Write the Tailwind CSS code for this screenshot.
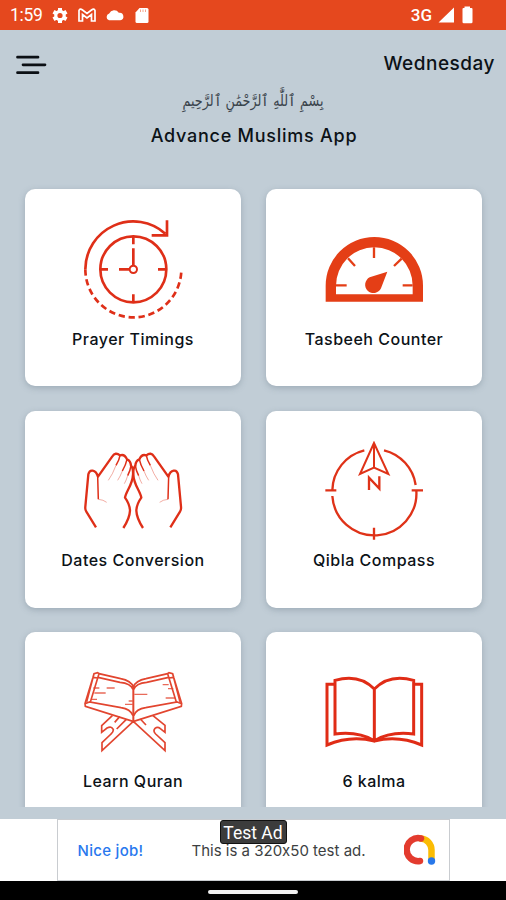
<!DOCTYPE html>
<html lang="en">
<head>
<meta charset="utf-8">
<title>Advance Muslims App</title>
<script src="https://cdn.jsdelivr.net/npm/@tailwindcss/browser@4"></script>
</head>
<body class="h-[900px] w-[506px] overflow-hidden bg-[#c1cdd6] font-['Inter',sans-serif] text-[#0c1217]">
<div class="flex h-[900px] flex-col">
  <header class="flex h-[30px] shrink-0 items-center bg-[#e5481e] pr-[33px] pl-[10px] text-white">
    <span class="w-[42px] font-['Roboto',sans-serif] text-[17.5px] leading-[32px] tracking-[-.3px] whitespace-nowrap">1:59</span>
    <svg class="h-[18px] w-[100px]" viewBox="52 6 100 18" fill="none">
      <circle cx="60" cy="15.5" r="4.2" stroke="#fff" stroke-width="3.2"/>
      <path d="M60 8v3M60 20v3M53.5 11.7l2.6 1.5M63.9 17.8l2.6 1.5M53.5 19.3l2.6-1.5M63.9 13.2l2.6-1.5" stroke="#fff" stroke-width="4"/>
      <path d="M79 21V10.500Q80 8 82.500 10L87 13.500 91.500 10Q94 8 95 10.500V21H91.500V14.500L87 18 82.500 14.500V21Z" stroke="#fff" stroke-width="1.700"/>
      <path d="M109 20.300a3.500 3.500 0 0 1 .2-6.700A5.500 5.500 0 0 1 118.800 12.800a3.800 3.800 0 0 1 1.500 7.500Z" fill="#fff"/>
      <path d="M139.500 8h7.500q1.500 0 1.500 1.500V21.500Q148.500 23 147 23H137q-1.500 0-1.500-1.500V12.500Z" fill="#fff"/>
      <path d="M140.500 9.500v2.500M143 9.500v2.500M145.500 9.500v2.500" stroke="#f5a58d" stroke-width="1"/>
    </svg>
    <span class="ml-auto font-['Roboto',sans-serif] text-[17px] leading-[30px] font-medium">3G</span>
    <svg class="ml-[5px] h-[18px] w-[36px]" viewBox="437 6 36 18" fill="#fff"><path d="M438.500 22.500L454 7.500V22.500ZM464.500 8V6.500H470V8h1.500q1 0 1 1V22q0 1.300-1.300 1.300h-7.400q-1.300 0-1.300-1.300V9q0-1 1-1Z"/></svg>
  </header>

  <main class="flex h-[777px] shrink-0 flex-col overflow-hidden">
    <div class="flex h-[56px] shrink-0 items-start justify-between pr-[11px] pl-4">
      <svg class="mt-[24px] h-[22px] w-[32px]" viewBox="0 0 32 22" stroke="#0b0f14" stroke-width="2.700" stroke-linecap="round"><path d="M1.500 3.200H22M7 10.800H29M1.500 18.700H22"/></svg>
      <span class="mt-[22px] text-[19px] leading-6 font-medium tracking-[.5px]">Wednesday</span>
    </div>
    <p dir="rtl" lang="ar" class="mt-[2px] h-[26px] shrink-0 scale-x-98 scale-y-120 text-center font-['DejaVu_Sans',sans-serif] text-[13px] leading-[26px] whitespace-nowrap text-[#3a444c]">بِسْمِ ٱللَّٰهِ ٱلرَّحْمَٰنِ ٱلرَّحِيمِ</p>
    <h1 class="mt-[10px] h-6 shrink-0 pl-[2px] text-center text-[18px] leading-6 font-medium tracking-[.75px]">Advance Muslims App</h1>

    <section class="mt-[41px] grid shrink-0 auto-rows-[197px] grid-cols-[216px_216px] gap-x-[25px] gap-y-[24.5px] pl-[25px] text-center text-[16px] leading-5 font-medium tracking-[.5px]">
      <div class="flex flex-col items-center rounded-[10px] bg-white pt-[30px] shadow-[0_2px_6px_#66788666]">
        <svg class="h-[100px] w-[100px] shrink-0" viewBox="39 42 300 300" fill="none" stroke="#df2f18" stroke-width="8">
          <circle cx="190" cy="193" r="99"/><circle cx="190" cy="193" r="11" stroke-width="6"/>
          <path d="M46 193A144 144 0 0 1 286 86M291 46V91H245M190 94V118M190 130V181M190 268V292M91 193H114M147 193H178M264 193H290"/>
          <path d="M46 193A144 144 0 0 0 334 193" stroke-dasharray="19 11.200"/>
        </svg>
        <span class="mt-[10px]">Prayer Timings</span>
      </div>
      <div class="flex flex-col items-center rounded-[10px] bg-white pt-[30px] shadow-[0_2px_6px_#66788666]">
        <svg class="h-[100px] w-[100px] shrink-0" viewBox="72 12 300 300" fill="#e43e16">
          <path fill-rule="evenodd" d="M77 260V212A146 146 0 0 1 369 212V260ZM108 238H338V212A115 115 0 0 0 108 212Z"/>
          <path d="M108 211H140M308 211H338M222 97V129M144 130L165 153M305 131L282 153" stroke="#e43e16" stroke-width="7"/>
          <path d="M262 170L209 187A25 25 0 1 0 243 220Z"/>
        </svg>
        <span class="mt-[10px]">Tasbeeh Counter</span>
      </div>
      <div class="flex flex-col items-center rounded-[10px] bg-white pt-[30px] shadow-[0_2px_6px_#66788666]">
        <svg class="h-[100px] w-[100px] shrink-0" viewBox="69 18 300 300" fill="none" stroke="#df2f18" stroke-width="7" stroke-linejoin="round">
          <g id="hand">
            <path d="M108 277L79 230Q75 224 76 215L85 118Q88 105 98 107Q109 109 114 125L157 64Q166 50 180 61Q194 56 201 73Q212 77 213 92Q220 99 219 119Q218 138 205 163Q196 181 195 188Q209 207 210 227Q209 250 190 279"/>
            <path d="M113 124L115 193M180 61Q178 75 168 91M201 73Q198 88 187 108M213 92Q211 107 203 122" stroke-width="4.500"/>
            <path d="M115 193Q130 194 140 202M168 91Q158 118 145 136M187 108Q181 124 173 136M203 122Q199 136 193 146" stroke-width="2" opacity=".6"/>
          </g>
          <use href="#hand" transform="translate(439 0) scale(-1 1)"/>
        </svg>
        <span class="mt-[9px]">Dates Conversion</span>
      </div>
      <div class="flex flex-col items-center rounded-[10px] bg-white pt-[30px] shadow-[0_2px_6px_#66788666]">
        <svg class="h-[100px] w-[100px] shrink-0" viewBox="72 33 300 300" fill="none" stroke="#df3218" stroke-width="7">
          <path d="M193 61A126 126 0 0 0 97 181M252 61A126 126 0 0 1 347 165M97 198A126 126 0 0 0 349 182M76 181H109M335 181H369M222 293V329"/>
          <path d="M222 39L180 132L222 113L265 132ZM222 39V113" stroke-width="6"/>
          <path d="M207 180V143L238 176V139" stroke-width="7"/>
        </svg>
        <span class="mt-[9px]">Qibla Compass</span>
      </div>
      <div class="flex flex-col items-center rounded-[10px] bg-white pt-[30px] shadow-[0_2px_6px_#66788666]">
        <svg class="h-[100px] w-[100px] shrink-0" viewBox="54 21 300 300" fill="none" stroke="#e2452f" stroke-width="5">
          <path id="stand" d="M205 96Q198 77 167 71L102 56L98 53L87 56L84 67L60 146L61 154L204 199M102 56L76 141L168 158Q196 162 204 182M99 67L165 82Q197 85 204 103M84 67L98 69M60 146L75 140M87 56L65 140"/>
          <path d="M205 90V199" stroke-width="6"/>
          <use href="#stand" transform="translate(410 0) scale(-1 1)"/>
          <path d="M142 182L110 212V232L126 219Q140 212 145 224Q145 231 138 237L111 263V287L205 199L300 287V263L272 237Q263 228 270 220Q278 214 286 221L300 232V211L263 181M164 185L149 202M184 193L155 222M226 192L243 210"/>
          <path d="M85 99H103M125 99H149M88 114H122M79 133H96M191 138H203M180 148H203M208 118H247M293 89H311M309 101H325M302 129H330" stroke-width="4" opacity=".8"/>
        </svg>
        <span class="mt-[9px]">Learn Quran</span>
      </div>
      <div class="flex flex-col items-center rounded-[10px] bg-white pt-[30px] shadow-[0_2px_6px_#66788666]">
        <svg class="h-[100px] w-[100px] shrink-0" viewBox="72 21 300 300" fill="none" stroke="#e02c16" stroke-width="9">
          <path d="M223 102Q177 55 105 76V237Q174 228 223 257Q272 228 341 237V76Q269 55 223 102ZM223 102V257"/>
          <path d="M105 88H81V270Q151 240 223 258Q295 240 365 270V88H341"/>
        </svg>
        <span class="mt-[9px]">6 kalma</span>
      </div>
    </section>
  </main>

  <footer class="mt-3 flex h-[62px] shrink-0 justify-center bg-white">
    <div class="relative flex w-[393px] items-center border border-[#c9ccd0] pt-[3px] pl-[20px] [font-feature-settings:'calt'_0]">
      <span class="w-[114px] text-[15px] font-medium tracking-[.3px] whitespace-nowrap text-[#2878ee]">Nice job!</span>
      <span class="text-[15px] whitespace-nowrap text-[#3d3f42]">This is a 320x50 test ad.</span>
      <svg class="absolute top-[14px] left-[346px] h-[32px] w-[32px]" viewBox="0 0 32 32" fill="none" stroke-width="6.500" stroke-linecap="round">
        <path d="M17 4.500A11.500 11.500 0 0 1 27.500 16V25" stroke="#fbbc04"/>
        <path d="M17 4.500A11.500 11.500 0 1 0 16 27" stroke="#e33b2e"/>
        <circle cx="27.500" cy="27" r="3.700" fill="#2878ea"/>
      </svg>
      <span class="absolute top-0 left-[162px] flex h-[24px] w-[67px] items-center justify-center rounded-[3px] border border-[#111] bg-[#3c3c3c] pt-[2px] font-['Roboto',sans-serif] text-[17.5px] whitespace-nowrap text-white">Test Ad</span>
    </div>
  </footer>
  <div class="flex h-[19px] shrink-0 justify-center bg-black pt-[9px]"><div class="h-[4px] w-[90px] rounded-full bg-[#f1f1f1]"></div></div>
</div>
</body>
</html>
